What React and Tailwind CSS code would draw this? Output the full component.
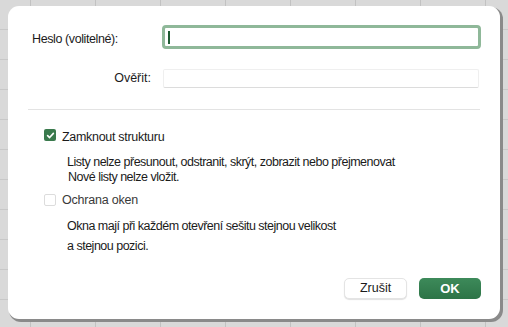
import React, { useState } from "react";

const font = { fontFamily: '"Liberation Sans", Arial, sans-serif' };

const App = () => {
  const [heslo, setHeslo] = useState("");
  const [overit, setOverit] = useState("");
  const [zamknout, setZamknout] = useState(true);

  return (
    <div
      className="w-[508px] h-[327px] overflow-hidden bg-[#d9d9d9] bg-[linear-gradient(90deg,#c2c2c2_1px,transparent_1px),linear-gradient(#c8c8c8_1px,transparent_1px)] bg-[size:65px_30px] bg-[position:30px_29px] pt-[6px] pl-[8px]"
      style={font}
    >
      <div className="w-[492px] h-[313px] bg-white rounded-[11px] shadow-[2px_2px_0_1px_#8a8a8a] text-[12.5px] text-[#1b1b1b]">
        {/* Heslo */}
        <div className="flex items-center pt-[19px] pl-[24px]">
          <label className="w-[130px] pt-[5px] tracking-[-0.4px]">Heslo (volitelné):</label>
          <div className="w-[319px] h-[24px] rounded-[4px] border-[3px] border-[#8fb899] flex items-center pl-[3px]">
            <input
              value={heslo}
              onChange={(e) => setHeslo(e.target.value)}
              className="w-full h-full outline-none bg-transparent text-[12px]"
            />
            <span className="absolute w-[2px] h-[13px] bg-[#1e5a32]" />
          </div>
        </div>

        {/* Ověřit */}
        <div className="flex items-center mt-[20px] pl-[24px]">
          <label className="w-[119px] text-right">Ověřit:</label>
          <input
            value={overit}
            onChange={(e) => setOverit(e.target.value)}
            className="ml-[12px] w-[316px] h-[19px] border border-[#efefef] border-b-[#dcdcdc] rounded-[2px] outline-none px-1 text-[12px]"
          />
        </div>

        <div className="ml-[20px] mt-[21px] w-[452px] h-px bg-[#e3e3e3]" />

        {/* Zamknout strukturu */}
        <label className="flex items-center mt-[19px] ml-[36px] h-[12px] cursor-pointer">
          <button
            type="button"
            onClick={() => setZamknout(!zamknout)}
            className={`w-[12px] h-[12px] rounded-[2px] flex items-center justify-center ${
              zamknout ? "bg-[#3a7a4d]" : "border border-[#c8c8c8] bg-white"
            }`}
          >
            {zamknout && (
              <svg width="9" height="9" viewBox="0 0 10 10">
                <path
                  d="M1.8 5.2 L4 7.3 L8.2 2.6"
                  fill="none"
                  stroke="white"
                  strokeWidth="1.8"
                  strokeLinecap="round"
                  strokeLinejoin="round"
                />
              </svg>
            )}
          </button>
          <span className="ml-[6px] pt-[4px] tracking-[-0.3px]">Zamknout strukturu</span>
        </label>

        <div className="ml-[59px] mt-[14px] leading-[15px] tracking-[-0.5px]">
          <div>Listy nelze přesunout, odstranit, skrýt, zobrazit nebo přejmenovat</div>
          <div className="ml-px">Nové listy nelze vložit.</div>
        </div>

        {/* Ochrana oken */}
        <div className="flex items-center mt-[9px] ml-[36px] h-[12px]">
          <span className="w-[12px] h-[12px] rounded-[2px] border border-[#dcdcdc] bg-white" />
          <span className="ml-[6px] pt-[1px] text-[#3a3a3a] tracking-[-0.2px]">Ochrana oken</span>
        </div>

        <div className="ml-[59px] mt-[10px] leading-[20px] tracking-[-0.5px]">
          <div>Okna mají při každém otevření sešitu stejnou velikost</div>
          <div>a stejnou pozici.</div>
        </div>

        {/* Buttons */}
        <div className="flex justify-end gap-[12px] mt-[22px] pr-[19px]">
          <button className="w-[63px] h-[21px] rounded-[5px] bg-white border border-[#e4e4e4] shadow-[0_1px_1px_rgba(0,0,0,0.12)] text-[12.5px] text-[#1b1b1b]">
            Zrušit
          </button>
          <button className="w-[62px] h-[21px] rounded-[5px] bg-[linear-gradient(#3d8a5a,#2d7447)] text-white text-[13px] font-bold">
            OK
          </button>
        </div>
      </div>
    </div>
  );
};

export default App;
